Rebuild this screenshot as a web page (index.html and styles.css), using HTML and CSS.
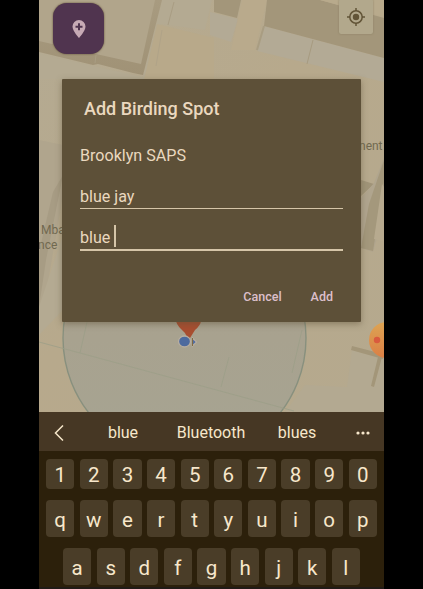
FILE: index.html
```html
<!DOCTYPE html>
<html lang="en">
<head>
<meta charset="utf-8">
<title>Add Birding Spot</title>
<link rel="stylesheet" href="styles.css">
</head>
<body>
<main class="phone">
  <section class="map">
    <svg class="map-art" viewBox="39 0 345 412" aria-hidden="true">
      <defs>
        <linearGradient id="ground" x1="0" y1="0" x2="1" y2="1"><stop offset="0" stop-color="#b4aa92"/><stop offset=".45" stop-color="#b7a98c"/><stop offset="1" stop-color="#b5a98e"/></linearGradient>
        <linearGradient id="wall" x1="0" y1="0" x2="0" y2="1"><stop offset="0" stop-color="#a89b80"/><stop offset="1" stop-color="#a09276"/></linearGradient>
        <linearGradient id="area" x1="0" y1="0" x2="0" y2="1"><stop offset="0" stop-color="#aaa08c"/><stop offset="1" stop-color="#a6a492"/></linearGradient>
        <linearGradient id="poi" x1="0" y1="0" x2="0" y2="1"><stop offset="0" stop-color="#dda453"/><stop offset="1" stop-color="#db7f45"/></linearGradient>
      </defs>
      <path fill="url(#ground)" d="M39 0h345v412H39z"/>
      <path fill="#b4aa92" d="M39 54 143 77 162 0h50l-7 30-44-6-17 55H39z"/>
      <path fill="#b8a98a" d="M157 24 214 38v42h-70z"/>
      <path fill="#b1a58b" d="M39 0h117l-15 65-102-23z"/>
      <path fill="url(#wall)" d="M39 41 96 54l45 10L155 0h7l-19 75-10-2-35-9-5 1-54-13z"/>
      <path fill="none" stroke="#a99d83" d="M174 2 168 25M96 55l-1 8"/>
      <path fill="none" stroke="#b0a388" d="M162 30 156 66"/>
      <path fill="#b3aa95" d="M210 12 238 19 231 42l-21-7zM264 26 384 58v24l-127-31z"/>
      <path fill="#a3967a" d="M214 0h27l-4 18-23-6z"/>
      <path fill="#b9aa8c" d="M242 0h25l-12 50h-24z"/>
      <path fill="#a3967a" d="M267 0h53l64 18v40L264 26z"/>
      <path fill="#b8aa8c" d="M320 0h64v17z"/>
      <path fill="none" stroke="#a99d82" stroke-width="2" d="M264 26 257 50"/>
      <path fill="none" stroke="#a79b80" d="M313 40 307 64"/>
      <path fill="#b0a58d" d="M39 140l24 5v50L45 299l-6 8z"/>
      <path fill="#a79c84" d="M63 175 46 260l-7 47v-55l14-60z"/>
      <path fill="#b4aa92" d="M63 235v75l-24 25v-28z"/>
      <path fill="#a09478" d="m361 180 13 4-13 12z"/>
      <path fill="#b0a58e" d="m374 183 10-25v55l-11 39-12-4v-50z"/>
      <path fill="#a4987c" d="M384 160v22l-11 69-12-3 8-44z"/>
      <path fill="#b7aa8f" d="m382 184 2 3v55l-10-3z"/>
      <path fill="#b3a991" d="m352 350 32 9v53H285l20-27 42 2z"/>
      <path fill="#a39679" d="m352 346 31 8v5l-32-9zM378 357h4l-8 30-3-1z"/>
      <circle cx="184.500" cy="338" r="121.500" fill="url(#area)" stroke="#88907e" stroke-width="1.400"/>
      <path fill="none" stroke="#9c9e88" stroke-width=".8" d="M39 342 80 353 294 411M87 322 80 353M229 357l-8 30M302 330 292 373"/>
      <path fill="#a84e30" d="M176 320h25q0 5-6 10l-5 8-3-1q-2-5-6-8-5-5-5-9z"/>
      <path fill="#4b69a2" stroke="#b9afa0" stroke-width="1.200" d="M192.500 338v8l4-4z"/>
      <ellipse cx="184.500" cy="341.500" rx="6" ry="5.500" fill="#4d6a9e" stroke="#b8aea0" stroke-width="1.300"/>
      <path fill="none" stroke="#806a45" d="M192.500 338v8"/>
      <circle cx="387" cy="340" r="18" fill="url(#poi)"/>
      <circle cx="377" cy="340" r="3.200" fill="#d95b3e"/>
    </svg>
    <span class="place place-left">&nbsp;Mba<br>nce</span>
    <span class="place place-right">nent</span>
    <button class="add-spot" aria-label="Add spot">
      <svg viewBox="0 0 14 18" width="14" height="18"><path fill="#c7aab5" d="M7 0a6.500 6.500 0 0 0-6.500 6.500C.5 11 7 18 7 18s6.500-7 6.500-11.500A6.500 6.500 0 0 0 7 0z"/><path fill="none" stroke="#50344f" stroke-width="2" d="M7 3.200v7M3.500 6.700h7"/></svg>
    </button>
    <button class="locate" aria-label="My location">
      <svg viewBox="0 0 18 18" width="18" height="18"><circle cx="9" cy="9" r="6.200" fill="none" stroke="#625437" stroke-width="1.500"/><circle cx="9" cy="9" r="3.200" fill="#625437"/><path stroke="#625437" stroke-width="1.500" d="M9 0v3M9 15v3M0 9h3M15 9h3"/></svg>
    </button>
    <section class="dialog">
      <h1 class="title">Add Birding Spot</h1>
      <div class="field plain">Brooklyn SAPS</div>
      <div class="field">blue jay</div>
      <div class="field focused">blue<span class="caret"></span></div>
      <div class="actions"><button>Cancel</button><button>Add</button></div>
    </section>
  </section>
  <section class="keyboard">
    <div class="suggestions">
      <svg class="back" viewBox="0 0 10 16" width="10" height="16"><path d="M9 .5 1.500 8 9 15.500"/></svg>
      <span>blue</span><span>Bluetooth</span><span>blues</span>
      <svg class="more" viewBox="0 0 14 4" width="14" height="4"><circle cx="2" cy="2" r="1.600"/><circle cx="7" cy="2" r="1.600"/><circle cx="12" cy="2" r="1.600"/></svg>
    </div>
    <div class="keys numbers"><kbd>1</kbd><kbd>2</kbd><kbd>3</kbd><kbd>4</kbd><kbd>5</kbd><kbd>6</kbd><kbd>7</kbd><kbd>8</kbd><kbd>9</kbd><kbd>0</kbd></div>
    <div class="keys"><kbd>q</kbd><kbd>w</kbd><kbd>e</kbd><kbd>r</kbd><kbd>t</kbd><kbd>y</kbd><kbd>u</kbd><kbd>i</kbd><kbd>o</kbd><kbd>p</kbd></div>
    <div class="keys home"><kbd>a</kbd><kbd>s</kbd><kbd>d</kbd><kbd>f</kbd><kbd>g</kbd><kbd>h</kbd><kbd>j</kbd><kbd>k</kbd><kbd>l</kbd></div>
  </section>
</main>
</body>
</html>
```
FILE: styles.css
```css
* { box-sizing: border-box; }
body { margin: 0; background: #000; font-family: Roboto, sans-serif; overflow: hidden; }
button { border: 0; padding: 0; background: none; font: inherit; color: inherit; }
.phone { width: 345px; height: 589px; margin-left: 39px; display: flex; flex-direction: column; overflow: hidden; }
.map { position: relative; height: 412px; padding: 79px 23px 0; overflow: hidden; }
.map-art { position: absolute; inset: 0; width: 345px; height: 412px; }
.place { position: absolute; font-size: 12px; line-height: 15px; color: #716950; white-space: nowrap; }
.place-left { left: -1px; top: 223px; }
.place-right { left: 320px; top: 139px; }
.add-spot { position: absolute; left: 14px; top: 3px; width: 51px; height: 51px; border-radius: 14px; background: #50344f; box-shadow: 0 0 2px #55452f; display: grid; place-items: center; }
.locate { position: absolute; left: 300px; top: -1px; width: 34px; height: 35px; border-radius: 2px; background: #b2a88c; box-shadow: 0 0 2px #897c60; display: grid; place-items: center; }
.dialog { position: relative; width: 299px; height: 243px; padding: 17px 18px 0; border-radius: 1px; background: #5d5038; color: #ead8bf; box-shadow: 0 2px 6px #5d503880; }
.title { margin: 0 0 0 4px; font-size: 18px; line-height: 26px; font-weight: 500; height: 43px; }
.field { width: 263px; height: 33px; padding-top: 10px; border-bottom: 1px solid #d5c5a8; font-size: 16.100px; line-height: 22px; display: flex; }
.field.plain { height: 37px; padding-top: 6px; border: 0; }
.field.focused { height: 34px; margin-top: 8px; border-bottom-width: 2px; }
.caret { width: 1.500px; height: 22px; margin: -2px 0 0 4px; background: #d5c5a8; }
.actions { display: flex; justify-content: flex-end; gap: 29px; padding: 36px 10px 0 0; color: #dcbfca; font-size: 12.500px; line-height: 20px; font-weight: 500; letter-spacing: .3px; }
.keyboard { height: 177px; background: #2c200b; border-bottom: 2px solid #211b16; color: #f7e7cb; }
.suggestions { height: 39px; padding-top: 2px; background: #463724; display: grid; grid-template-columns: 39px 90px 86px 86px 46px; align-items: center; justify-items: center; font-size: 16px; }
.back { fill: none; stroke: #f7e7cb; stroke-width: 1.500px; }
.more { fill: #f7e7cb; }
.keys { display: grid; grid-template-columns: repeat(10, 1fr); gap: 5.300px; height: 37px; margin: 11px 7px 0; }
.keys.numbers { height: 30px; margin-top: 8px; }
.keys.home { grid-template-columns: repeat(9, 1fr); margin: 11px 24px 0; }
kbd { display: flex; align-items: center; justify-content: center; border-radius: 4px; background: #4a3d28; font: 20.500px/24px Roboto, sans-serif; padding-top: 2px; }
```
